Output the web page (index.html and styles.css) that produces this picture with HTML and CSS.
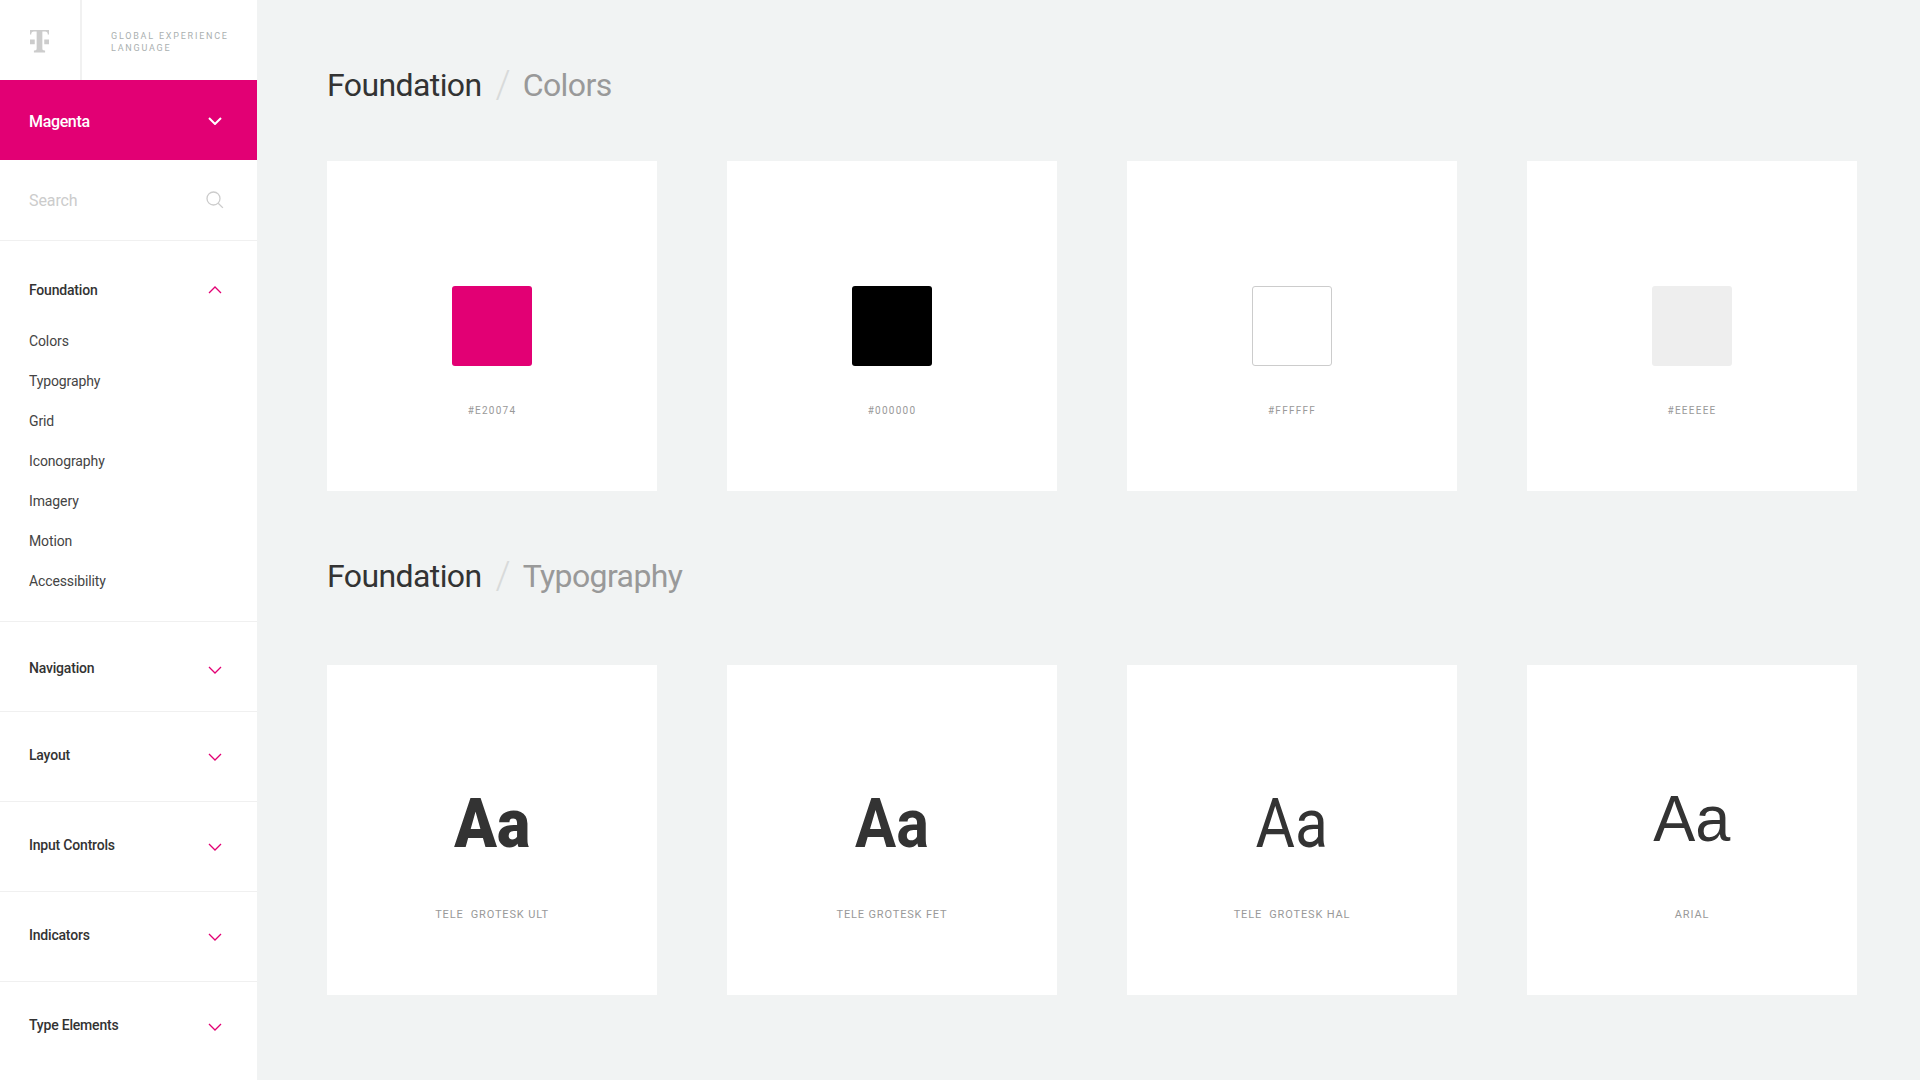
FILE: index.html
```html
<!DOCTYPE html>
<html lang="en">
<head>
<meta charset="utf-8">
<title>Global Experience Language</title>
<link rel="stylesheet" href="styles.css">
</head>
<body>
<svg class="sprite" width="0" height="0" aria-hidden="true">
  <symbol id="down" viewBox="0 0 14 8"><path d="M1 1l6 6 6-6" fill="none" stroke="currentColor"/></symbol>
  <symbol id="up" viewBox="0 0 14 8"><path d="M1 7l6-6 6 6" fill="none" stroke="currentColor"/></symbol>
</svg>
<div class="app">
  <aside class="sidebar">
    <header class="brand">
      <div class="brand-logo">
        <svg class="logo" viewBox="0 0 20 24" width="20" height="24"><path d="M0 0h20v4.500h-1.300c0-1.900-1-2.900-2.900-2.900h-2.800v17.600c0 1.700.5 2.200 2.300 2.200h.6v2.100h-11.800v-2.100h.6c1.800 0 2.300-.5 2.300-2.200V1.600H4.200c-1.900 0-2.900 1-2.900 2.900H0z" fill="#ccc"/><path d="M0 10h5v5H0zM15 10h5v5h-5z" fill="#ccc"/></svg>
      </div>
      <div class="brand-name">GLOBAL EXPERIENCE<br>LANGUAGE</div>
    </header>
    <div class="brand-switch">
      <span>Magenta</span>
      <svg class="chev chev-white"><use href="#down"/></svg>
    </div>
    <div class="search">
      <span>Search</span>
      <svg class="search-icon" viewBox="0 0 18 18" width="18" height="18"><circle cx="7.500" cy="7.500" r="6.500" fill="none" stroke="#ccc" stroke-width="1.300"/><path d="M12.200 12.200l4.700 4.700" fill="none" stroke="#ccc" stroke-width="1.300"/></svg>
    </div>
    <nav>
      <section class="group group-open">
        <div class="group-head"><span>Foundation</span><svg class="chev"><use href="#up"/></svg></div>
        <ul class="sublist">
          <li>Colors</li><li>Typography</li><li>Grid</li><li>Iconography</li><li>Imagery</li><li>Motion</li><li>Accessibility</li>
        </ul>
      </section>
      <section class="group group-low"><div class="group-head"><span>Navigation</span><svg class="chev"><use href="#down"/></svg></div></section>
      <section class="group"><div class="group-head"><span>Layout</span><svg class="chev"><use href="#down"/></svg></div></section>
      <section class="group"><div class="group-head"><span>Input Controls</span><svg class="chev"><use href="#down"/></svg></div></section>
      <section class="group"><div class="group-head"><span>Indicators</span><svg class="chev"><use href="#down"/></svg></div></section>
      <section class="group"><div class="group-head"><span>Type Elements</span><svg class="chev"><use href="#down"/></svg></div></section>
    </nav>
  </aside>
  <main class="main">
    <h1 class="crumb"><span>Foundation</span><i class="slash">/</i><em>Colors</em></h1>
    <div class="cards">
      <div class="card"><div class="swatch swatch-magenta"></div><div class="code">#E20074</div></div>
      <div class="card"><div class="swatch swatch-black"></div><div class="code">#000000</div></div>
      <div class="card"><div class="swatch swatch-white"></div><div class="code">#FFFFFF</div></div>
      <div class="card"><div class="swatch swatch-grey"></div><div class="code">#EEEEEE</div></div>
    </div>
    <h1 class="crumb crumb-second"><span>Foundation</span><i class="slash">/</i><em>Typography</em></h1>
    <div class="cards">
      <div class="card card-type"><div class="aa aa-ult">Aa</div><div class="type-name">TELE&nbsp; GROTESK ULT</div></div>
      <div class="card card-type"><div class="aa aa-fet">Aa</div><div class="type-name">TELE GROTESK FET</div></div>
      <div class="card card-type"><div class="aa aa-hal">Aa</div><div class="type-name">TELE&nbsp; GROTESK HAL</div></div>
      <div class="card card-type"><div class="aa aa-arial">Aa</div><div class="type-name">ARIAL</div></div>
    </div>
  </main>
</div>
</body>
</html>
```
FILE: styles.css
```css
* { box-sizing: border-box; }
html, body { margin: 0; height: 100%; }
body { background: #f1f3f3; color: #333; font-family: Roboto, "Liberation Sans", sans-serif; overflow: hidden; }
.sprite { position: absolute; }
ul { list-style: none; margin: 0; padding: 0; }
.app { display: flex; height: 1080px; }

.sidebar { width: 257px; flex: none; background: #fff; }
.brand { display: flex; height: 80px; }
.brand-logo { width: 82px; flex: none; border-right: 2px solid #f1f1f1; padding: 30px 0 0 30px; }
.logo { display: block; width: 19px; height: 23px; }
.brand-name { padding: 30px 0 0 29px; font-size: 9px; line-height: 12px; letter-spacing: 1.780px; color: #aab0b0; white-space: nowrap; }
.brand-switch { height: 80px; background: #e20074; color: #fff; display: flex; align-items: center; justify-content: space-between; padding: 2px 35px 0 29px; font-size: 16px; font-weight: 500; letter-spacing: -.35px; }
.search { height: 81px; border-bottom: 1px solid #f0f0f0; display: flex; align-items: center; justify-content: space-between; padding: 0 33px 0 29px; font-size: 16px; letter-spacing: -.1px; color: #ccc; }
.search-icon { display: block; }
.chev { width: 14px; height: 8px; display: block; color: #e20074; flex: none; stroke-width: 1.300px; margin-top: 4px; }
.chev-white { color: #fff; stroke-width: 2px; margin-top: 0; }

.group { height: 90px; border-bottom: 1px solid #f0f0f0; }
.group-head { height: 89px; display: flex; align-items: center; justify-content: space-between; padding: 0 35px 4px 29px; font-size: 14px; font-weight: 500; letter-spacing: -.2px; color: #333; }
.group-low .group-head { padding: 3px 35px 0 29px; }
.group:last-child { border-bottom: 0; height: 99px; }
.group-open { height: 381px; }
.group-open .group-head { height: 98px; padding-bottom: 0; }
.group-open .chev { margin-top: 0; }
.sublist { margin-top: -18px; }
.sublist li { height: 40px; line-height: 40px; padding-left: 29px; font-size: 14px; letter-spacing: -.12px; color: #444; }

.main { flex: 1; padding: 0 63px 0 70px; min-width: 0; }
.crumb { margin: 0; height: 161px; padding-top: 61px; display: flex; align-items: baseline; font-size: 32px; line-height: 44px; font-weight: 400; letter-spacing: -.6px; color: #333; white-space: nowrap; }
.crumb em { font-style: normal; color: #999; }
.slash { font-style: normal; font-weight: 300; font-size: 38px; letter-spacing: 0; color: #d8dada; margin: 0 12px 0 14px; transform: translateY(2px); }
.crumb-second { height: 174px; padding-top: 61px; }
.cards { display: grid; grid-template-columns: repeat(4, 330px); column-gap: 70px; }
.card { height: 330px; background: #fff; display: flex; flex-direction: column; align-items: center; padding-top: 125px; }
.swatch { width: 80px; height: 80px; border-radius: 3px; }
.swatch-magenta { background: #e20074; }
.swatch-black { background: #000; }
.swatch-white { background: #fff; border: 1px solid #ccc; }
.swatch-grey { background: #eee; }
.code { margin-top: 37px; font-size: 10px; line-height: 16px; letter-spacing: 1.250px; color: #999; }
.card-type { padding-top: 122px; }
.aa { height: 74px; font-size: 68px; line-height: 74px; color: #333; }
.aa-ult { font-weight: 900; transform: scaleX(.92); }
.aa-fet { font-weight: 700; transform: scaleX(.9); }
.aa-hal { font-weight: 400; transform: scaleX(.89); }
.aa-arial { font-family: "Liberation Sans", Arial, sans-serif; font-size: 65px; margin-top: -5px; margin-bottom: 5px; transform: scaleX(.97); }
.type-name { margin-top: 46px; font-size: 11px; line-height: 16px; letter-spacing: .85px; color: #999; }
```
